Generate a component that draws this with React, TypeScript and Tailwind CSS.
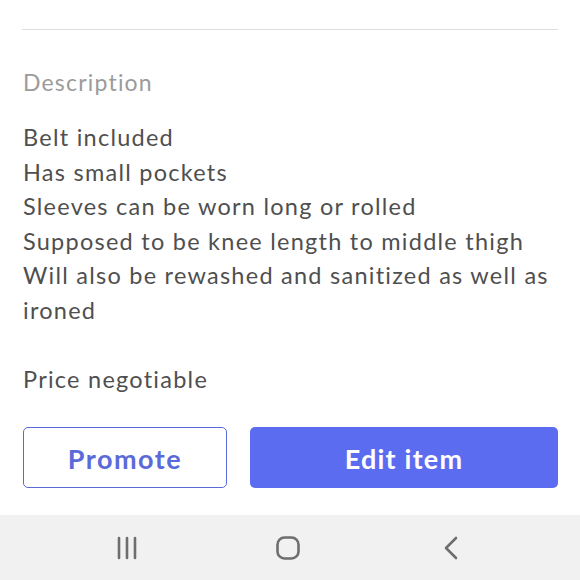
import React from "react";

export default function App() {
  const lines = [
    "Belt included",
    "Has small pockets",
    "Sleeves can be worn long or rolled",
    "Supposed to be knee length to middle thigh",
    "Will also be rewashed and sanitized as well as",
    "ironed",
    "\u00a0",
    "Price negotiable",
  ];
  return (
    <div
      className="w-[580px] h-[580px] bg-white flex flex-col overflow-hidden"
      style={{ fontFamily: "Lato, 'Noto Sans', sans-serif" }}
    >
      <div className="flex-1 px-[22px] flex flex-col">
        <div className="mt-[29px] h-px bg-[#dcdfe2]" />
        <div className="mt-[37px] h-[30px] leading-[30px] text-[23px] tracking-[1.2px] text-[#9b9b9b] pl-px">
          Description
        </div>
        <div className="mt-[23px] text-[23.5px] tracking-[1.25px] leading-[34.6px] text-[#4f4f4f] pl-px whitespace-nowrap">
          {lines.map((l, i) => (
            <div key={i}>{l}</div>
          ))}
        </div>
        <div className="mt-[30px] flex gap-[23px] pl-px">
          <button className="w-[204px] h-[61px] pt-[3px] rounded-[5px] border-[1.5px] border-[#5b6ad9] text-[#5b6ad9] text-[27px] tracking-[1.5px] font-bold bg-white">
            Promote
          </button>
          <button className="flex-1 h-[61px] pt-[3px] rounded-[5px] bg-[#5c6cf0] text-white text-[27px] tracking-[1.2px] font-bold">
            Edit item
          </button>
        </div>
      </div>
      <div className="h-[65px] bg-[#f1f1f1] flex items-center">
        <div className="w-[254px] flex justify-center">
          <svg width="22" height="24" viewBox="0 0 22 24">
            <g stroke="#6e6e6e" strokeWidth="2.6" strokeLinecap="round">
              <line x1="3" y1="2" x2="3" y2="22" />
              <line x1="11" y1="2" x2="11" y2="22" />
              <line x1="19" y1="2" x2="19" y2="22" />
            </g>
          </svg>
        </div>
        <div className="w-[68px] flex justify-center">
          <svg width="24" height="24" viewBox="0 0 24 24">
            <rect x="1.5" y="1.5" width="21" height="21" rx="7" fill="none" stroke="#6e6e6e" strokeWidth="2.6" />
          </svg>
        </div>
        <div className="flex-1 flex justify-center">
          <svg width="16" height="24" viewBox="0 0 16 24">
            <polyline points="13,2 3,12 13,22" fill="none" stroke="#6e6e6e" strokeWidth="2.6" strokeLinecap="round" strokeLinejoin="round" />
          </svg>
        </div>
      </div>
    </div>
  );
}
